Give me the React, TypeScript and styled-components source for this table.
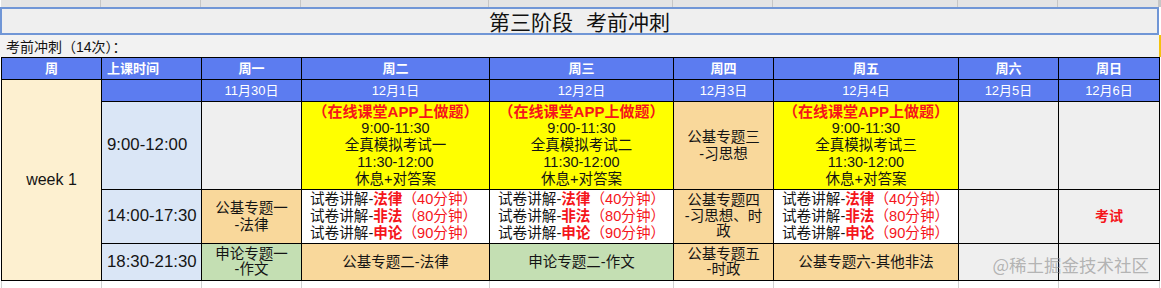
import React from "react";
import styled, { createGlobalStyle } from "styled-components";

const GlobalStyle = createGlobalStyle`
  html, body {
    margin: 0;
    padding: 0;
    background: #fff;
  }
  body {
    font-family: "Liberation Sans", "Noto Sans CJK SC", sans-serif;
    color: #141414;
  }
`;

const COLS = "99px 99px 99px 187px 183px 99px 184px 99px 100px";
const COL_COUNT = 9;

type Tone = "blue" | "cream" | "sky" | "orange" | "green" | "grey" | "yellow" | "white";

const tones: Record<Tone, string> = {
  blue: "#5c7cf0",
  cream: "#fdf0d0",
  sky: "#dae6f6",
  orange: "#f9d89b",
  green: "#c4dfb3",
  grey: "#efefef",
  yellow: "#ffff00",
  white: "#ffffff",
};

const days = ["周一", "周二", "周三", "周四", "周五", "周六", "周日"];
const dates = ["11月30日", "12月1日", "12月2日", "12月3日", "12月4日", "12月5日", "12月6日"];

const App: React.FC = () => {
  return (
    <>
      <GlobalStyle />
      <Page>
        <HeadStrip>
          {Array.from({ length: COL_COUNT }, (_, i) => (
            <StripCell key={i} />
          ))}
        </HeadStrip>
        <TitleBar>
          <span>第三阶段</span>
          <span>考前冲刺</span>
        </TitleBar>
        <SubRow>考前冲刺（14次）：</SubRow>

        <Table>
          <HeadCell $tone="blue">周</HeadCell>
          <HeadCell $tone="blue" $align="left">上课时间</HeadCell>
          {days.map((d) => (
            <HeadCell key={d} $tone="blue">{d}</HeadCell>
          ))}

          <Cell $tone="cream" $span={4} $size={16}>week 1</Cell>
          <HeadCell $tone="blue" />
          {dates.map((d) => (
            <DateCell key={d} $tone="blue">{d}</DateCell>
          ))}

          {/* 上午 */}
          <Cell $tone="sky" $align="left" $size={16.8}>9:00-12:00</Cell>
          <Cell $tone="grey" />
          <MockExam name="全真模拟考试一" />
          <MockExam name="全真模拟考试二" />
          <Cell $tone="orange">公基专题三<br />-习思想</Cell>
          <MockExam name="全真模拟考试三" />
          <Cell $tone="grey" />
          <Cell $tone="grey" />

          {/* 下午 */}
          <Cell $tone="sky" $align="left" $size={16.8}>14:00-17:30</Cell>
          <Cell $tone="orange">公基专题一<br />-法律</Cell>
          <Review />
          <Review />
          <Cell $tone="orange" $lh={15.8}>公基专题四<br />-习思想、时<br />政</Cell>
          <Review />
          <Cell $tone="grey" />
          <Cell $tone="grey"><Red $size={14}>考试</Red></Cell>

          {/* 晚上 */}
          <Cell $tone="sky" $align="left" $size={16.8}>18:30-21:30</Cell>
          <Cell $tone="green" $lh={15}>申论专题一<br />-作文</Cell>
          <Cell $tone="orange">公基专题二-法律</Cell>
          <Cell $tone="green">申论专题二-作文</Cell>
          <Cell $tone="orange" $lh={15}>公基专题五<br />-时政</Cell>
          <Cell $tone="orange">公基专题六-其他非法</Cell>
          <Cell $tone="grey" />
          <Cell $tone="grey" />
        </Table>

        <Filler>
          {Array.from({ length: COL_COUNT }, (_, i) => (
            <FillCell key={i} />
          ))}
        </Filler>

        <Watermark>@稀土掘金技术社区</Watermark>
      </Page>
    </>
  );
};

const MockExam: React.FC<{ name: string }> = ({ name }) => (
  <Cell $tone="yellow">
    <Red $size={15}>（在线课堂APP上做题）</Red>
    <span>9:00-11:30</span>
    <span>{name}</span>
    <span>11:30-12:00</span>
    <span>休息+对答案</span>
  </Cell>
);

const reviews = [
  ["法律", "40"],
  ["非法", "80"],
  ["申论", "90"],
];

const Review: React.FC = () => (
  <Cell $tone="white" $align="left" $size={14.6} $lh={17.3} $pad={8}>
    {reviews.map(([subject, mins]) => (
      <span key={subject}>
        试卷讲解-<Red>{subject}</Red><RedSoft>（{mins}分钟）</RedSoft>
      </span>
    ))}
  </Cell>
);

export default App;

const Page = styled.div`
  position: relative;
  width: 1161px;
  height: 288px;
  overflow: hidden;
  background: #fff;
`;

const HeadStrip = styled.div`
  display: grid;
  grid-template-columns: ${COLS};
  column-gap: 1px;
  height: 7px;
  margin-left: 1px;
  background: #c6c6c6;
`;

const StripCell = styled.div`
  background: #e4e4e4;
`;

const TitleBar = styled.div`
  box-sizing: border-box;
  width: 1159px;
  height: 28px;
  border: 2px solid #7096d6;
  background: #efefef;
  display: flex;
  align-items: center;
  justify-content: center;
  gap: 13px;
  font-size: 21px;
  color: #111;
`;

const SubRow = styled.div`
  box-sizing: border-box;
  width: 1161px;
  height: 22px;
  padding-left: 6px;
  display: flex;
  align-items: center;
  background: #f2f2f2;
  border-right: 2px solid #f4c20d;
  font-size: 14px;
  color: #111;
`;

const Table = styled.div`
  display: grid;
  grid-template-columns: ${COLS};
  grid-template-rows: 21px 21px 87px 53px 36px;
  gap: 1px;
  width: fit-content;
  margin-left: 1px;
  border: 1px solid #000;
  background: #000;
`;

const Cell = styled.div<{
  $tone: Tone;
  $align?: "left" | "center";
  $size?: number;
  $lh?: number;
  $span?: number;
  $pad?: number;
}>`
  background: ${(p) => tones[p.$tone]};
  display: flex;
  flex-direction: column;
  justify-content: center;
  align-items: ${(p) => (p.$align === "left" ? "flex-start" : "center")};
  text-align: ${(p) => (p.$align === "left" ? "left" : "center")};
  padding: 0 ${(p) => p.$pad ?? (p.$align === "left" ? 5 : 2)}px;
  font-size: ${(p) => p.$size ?? 14.5}px;
  line-height: ${(p) => p.$lh ?? 16.7}px;
  grid-row: ${(p) => (p.$span ? `span ${p.$span}` : "auto")};
  white-space: nowrap;
  overflow: hidden;
`;

const HeadCell = styled(Cell)`
  color: #fff;
  font-size: 13px;
  font-weight: bold;
  line-height: 21px;
`;

const DateCell = styled(Cell)`
  color: #fff;
  font-size: 13px;
  line-height: 21px;
`;

const Red = styled.span<{ $size?: number }>`
  color: #f5151b;
  font-weight: bold;
  ${(p) => (p.$size ? `font-size: ${p.$size}px;` : "")}
`;

const RedSoft = styled.span`
  color: #f5151b;
`;

const Filler = styled.div`
  display: grid;
  grid-template-columns: ${COLS};
  column-gap: 1px;
  height: 8px;
  margin-left: 1px;
  border-left: 1px solid #d0d0d0;
  border-right: 1px solid #d0d0d0;
  width: fit-content;
  background: #d0d0d0;
`;

const FillCell = styled.div`
  background: #fff;
`;

const Watermark = styled.div`
  position: absolute;
  right: 12px;
  top: 252px;
  font-size: 17.5px;
  color: rgba(140, 140, 140, 0.62);
  font-family: "Noto Sans CJK SC", sans-serif;
  pointer-events: none;
`;
